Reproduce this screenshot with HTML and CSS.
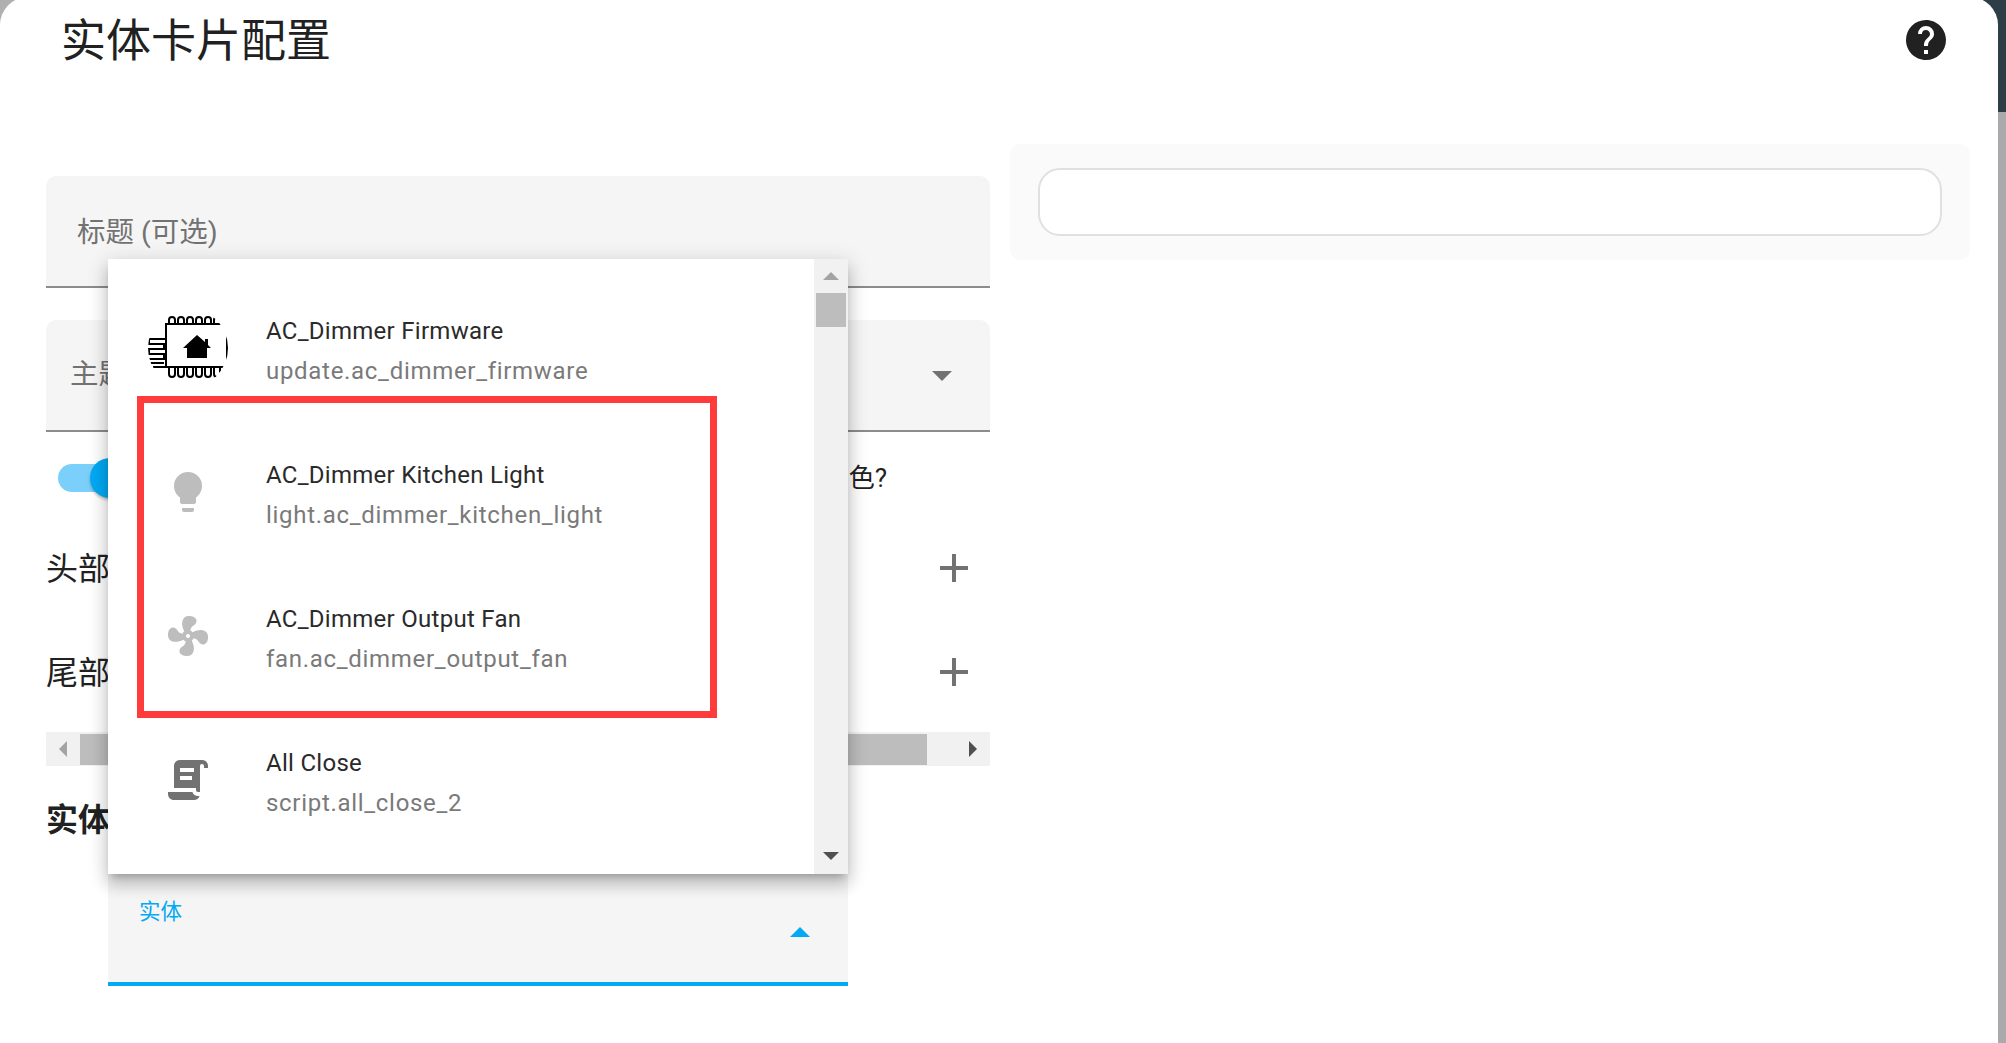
FILE: index.html
```html
<!DOCTYPE html>
<html lang="zh">
<head>
<meta charset="utf-8">
<title>实体卡片配置</title>
<link rel="stylesheet" href="styles.css">
</head>
<body>
<main class="dialog">
  <header class="header">
    <h1 class="title">实体卡片配置</h1>
    <svg class="help" viewBox="0 0 24 24"><path d="M15.07,11.25L14.17,12.17C13.45,12.89 13,13.5 13,15H11V14.5C11,13.39 11.45,12.39 12.17,11.67L13.41,10.41C13.78,10.05 14,9.55 14,9C14,7.89 13.1,7 12,7A2,2 0 0,0 10,9H8A4,4 0 0,1 12,5A4,4 0 0,1 16,9C16,9.88 15.64,10.67 15.07,11.25M13,19H11V17H13M12,2A10,10 0 0,0 2,12C2,17.52 6.48,22 12,22A10,10 0 0,0 22,12C22,6.47 17.5,2 12,2Z"/></svg>
  </header>
  <div class="columns">
    <section class="editor">
      <div class="field field-title"><span class="field-label">标题 (可选)</span></div>
      <div class="field field-theme"><span class="field-label">主题</span><span class="tri tri-down"></span></div>
      <div class="switch-row">
        <span class="toggle"><span class="toggle-knob"></span></span>
        <span class="switch-label">根据状态为图标着色?</span>
      </div>
      <div class="add-row"><span class="add-label">头部微件</span><svg class="plus" viewBox="0 0 28 28"><path d="M12 0h4v12h12v4H16v12h-4V16H0v-4h12z"/></svg></div>
      <div class="add-row"><span class="add-label">尾部微件</span><svg class="plus" viewBox="0 0 28 28"><path d="M12 0h4v12h12v4H16v12h-4V16H0v-4h12z"/></svg></div>
      <div class="hscroll">
        <span class="hscroll-btn"><span class="tri tri-left"></span></span>
        <span class="hscroll-thumb"></span>
        <span class="hscroll-btn"><span class="tri tri-right"></span></span>
      </div>
      <h2 class="section-title">实体 (必填)</h2>
      <div class="field field-entity"><span class="entity-label">实体</span><span class="tri tri-up-blue"></span></div>
    </section>
    <aside class="preview">
      <div class="preview-card"></div>
    </aside>
  </div>

  <div class="dropdown">
    <ul class="list">
      <li class="item">
        <span class="item-icon">
          <svg class="chip" viewBox="0 0 80 80">
            <defs><clipPath id="round"><circle cx="40" cy="40" r="40"/></clipPath></defs>
            <g clip-path="url(#round)">
              <path class="chip-line" d="M18 16H79V59H18ZM5 59H18"/>
              <path class="chip-line" d="M21 16V12a3 3 0 0 1 6 0V16M30 16V12a3 3 0 0 1 6 0V16M39 16V12a3 3 0 0 1 6 0V16M48 16V12a3 3 0 0 1 6 0V16M57 16V12a3 3 0 0 1 6 0V16M66 16V12a3 3 0 0 1 6 0V16"/>
              <path class="chip-line" d="M21 59V66a3 3 0 0 0 6 0V59M30 59V66a3 3 0 0 0 6 0V59M39 59V66a3 3 0 0 0 6 0V59M48 59V66a3 3 0 0 0 6 0V59M57 59V66a3 3 0 0 0 6 0V59M66 59V66a3 3 0 0 0 6 0V59"/>
              <path class="chip-line" d="M18 31H1V36H16V41H1V46H16V51H1V55H16"/>
              <path d="M49 27L57 34V31H60V37L63 40H59V50H39V40H35Z"/>
            </g>
          </svg>
        </span>
        <span class="item-text"><span class="item-name">AC_Dimmer Firmware</span><span class="item-id">update.ac_dimmer_firmware</span></span>
      </li>
      <li class="item">
        <span class="item-icon">
          <svg class="icon icon-off" viewBox="0 0 24 24"><path d="M12,2A7,7 0 0,0 5,9C5,11.38 6.19,13.47 8,14.74V17A1,1 0 0,0 9,18H15A1,1 0 0,0 16,17V14.74C17.81,13.47 19,11.38 19,9A7,7 0 0,0 12,2M9,21A1,1 0 0,0 10,22H14A1,1 0 0,0 15,21V20H9V21Z"/></svg>
        </span>
        <span class="item-text"><span class="item-name">AC_Dimmer Kitchen Light</span><span class="item-id">light.ac_dimmer_kitchen_light</span></span>
      </li>
      <li class="item">
        <span class="item-icon">
          <svg class="icon icon-off" viewBox="0 0 24 24"><path d="M12,11A1,1 0 0,0 11,12A1,1 0 0,0 12,13A1,1 0 0,0 13,12A1,1 0 0,0 12,11M12.5,2C17,2 17.11,5.57 14.75,6.75C13.76,7.24 13.32,8.29 13.13,9.22C13.61,9.42 14.03,9.73 14.35,10.13C18.05,8.13 22.03,8.92 22.03,12.5C22.03,17 18.46,17.1 17.28,14.73C16.78,13.74 15.72,13.3 14.79,13.11C14.59,13.59 14.28,14 13.88,14.34C15.87,18.03 15.08,22 11.5,22C7,22 6.91,18.42 9.27,17.24C10.25,16.75 10.69,15.71 10.89,14.79C10.4,14.59 9.97,14.27 9.65,13.87C5.96,15.85 2,15.07 2,11.5C2,7 5.56,6.89 6.74,9.26C7.24,10.25 8.29,10.68 9.22,10.87C9.41,10.39 9.73,9.97 10.14,9.65C8.15,5.96 8.94,2 12.5,2Z"/></svg>
        </span>
        <span class="item-text"><span class="item-name">AC_Dimmer Output Fan</span><span class="item-id">fan.ac_dimmer_output_fan</span></span>
      </li>
      <li class="item">
        <span class="item-icon">
          <svg class="icon icon-on" viewBox="0 0 24 24"><path d="M17.8,20C17.4,21.2 16.3,22 15,22H5C3.3,22 2,20.7 2,19V18H5L14.2,18C14.6,19.2 15.7,20 17,20H17.8M19,2C20.7,2 22,3.3 22,5V6H20V5C20,4.4 19.6,4 19,4C18.4,4 18,4.4 18,5V18H17C16.4,18 16,17.6 16,17V16H5V5C5,3.3 6.3,2 8,2H19M8,6V8H15V6H8M8,10V12H14V10H8Z"/></svg>
        </span>
        <span class="item-text"><span class="item-name">All Close</span><span class="item-id">script.all_close_2</span></span>
      </li>
    </ul>
    <div class="vscroll">
      <span class="tri tri-up-gray"></span>
      <span class="vscroll-thumb"></span>
      <span class="vscroll-space"></span>
      <span class="tri tri-down-dark"></span>
    </div>
  </div>

  <div class="annotation"></div>
</main>
<div class="page-scroll"><span class="page-scroll-thumb"></span></div>
</body>
</html>
```

FILE: styles.css
```css
* { box-sizing: border-box; }
html, body { height: 100%; }
body {
  margin: 0;
  display: flex;
  overflow: hidden;
  font-family: Roboto, "Noto Sans CJK SC", sans-serif;
  color: #212121;
  background: linear-gradient(90deg, #b0b0b0 50%, #2f3e46 50%);
}
.dialog {
  position: relative;
  flex: 1;
  margin-top: -3px;
  height: 1046px;
  padding: 0 28px 0 46px;
  background: #fff;
  border-radius: 28px 28px 0 0;
  overflow: hidden;
}
.page-scroll { width: 8px; background: #aaa; }
.page-scroll-thumb { display: block; height: 112px; background: #2f3e46; }

.header {
  height: 147px;
  display: flex;
  justify-content: space-between;
  padding: 15px 20px 0 15px;
}
.title { margin: 0; font-size: 45px; line-height: 60px; font-weight: 400; }
.help { width: 48px; height: 48px; margin-top: 4px; fill: #212121; }

.columns { display: flex; gap: 20px; align-items: flex-start; }
.editor { width: 944px; padding-top: 32px; }

.preview { flex: 1; height: 116px; padding: 24px 28px; background: #fafafa; border-radius: 10px; }
.preview-card { height: 68px; background: #fff; border: 2px solid #e0e0e0; border-radius: 22px; }

.field { background: #f5f5f5; height: 112px; border-radius: 10px 10px 0 0; border-bottom: 2px solid #8c8c8c; position: relative; }
.field-label { color: #727272; font-size: 28.5px; line-height: 36px; }
.field-title { padding: 39px 31px 0; margin-bottom: 32px; }
.field-theme { display: flex; align-items: center; justify-content: space-between; padding: 0 38px 0 24px; }
.field-entity {
  margin: 34px 142px 0 62px;
  width: 740px;
  border-radius: 0;
  border-bottom: 4px solid #03a9f4;
  display: flex;
  justify-content: space-between;
  padding: 25px 38px 0 31px;
}
.entity-label { color: #03a9f4; font-size: 21.5px; line-height: 26px; }

.tri { display: block; width: 0; height: 0; border-style: solid; border-color: transparent; }
.tri-down { border-width: 10px 10px 0; border-top-color: #727272; margin-top: 2px; }
.tri-up-blue { border-width: 0 10px 10px; border-bottom-color: #03a9f4; margin-top: 28px; }
.tri-left { border-width: 8px 8px 8px 0; border-right-color: #a3a3a3; }
.tri-right { border-width: 8px 0 8px 8px; border-left-color: #505050; }
.tri-up-gray { border-width: 0 8px 8px; border-bottom-color: #a3a3a3; }
.tri-down-dark { border-width: 8px 8px 0; border-top-color: #505050; }

.switch-row { display: flex; align-items: center; height: 40px; margin: 26px 0 18px; padding: 0 103px 0 12px; justify-content: space-between; }
.toggle { position: relative; display: block; width: 72px; height: 28px; border-radius: 14px; background: #7bd0fb; }
.toggle-knob { position: absolute; left: 32px; top: -6px; width: 40px; height: 40px; border-radius: 50%; background: #03a9f4; box-shadow: 0 2px 3px rgba(0,0,0,.25); }
.switch-label { font-size: 26px; line-height: 36px; }

.add-row { height: 104px; display: flex; align-items: center; justify-content: space-between; padding-right: 22px; font-size: 32px; }
.add-label { padding-bottom: 5px; }
.plus { width: 28px; height: 28px; fill: #727272; }

.hscroll { display: flex; height: 34px; margin-top: 8px; background: #f1f1f1; align-items: center; }
.hscroll-btn { width: 34px; display: flex; justify-content: center; flex: none; }
.hscroll-thumb { flex: 1; height: 31px; margin-right: 29px; background: #bdbdbd; }

.section-title { margin: 34px 0 0; font-size: 32px; line-height: 40px; font-weight: 700; }

.dropdown {
  position: absolute;
  left: 108px;
  top: 262px;
  width: 740px;
  height: 615px;
  display: flex;
  background: #fff;
  box-shadow: 0 6px 7px -4px rgba(0,0,0,.2), 0 11px 14px 1px rgba(0,0,0,.14), 0 4px 19px 3px rgba(0,0,0,.12);
}
.list { flex: 1; list-style: none; margin: 0; padding: 19px 0 0; }
.item { height: 144px; display: flex; align-items: center; padding-left: 56px; }
.item-icon { width: 48px; height: 48px; flex: none; margin-right: 54px; display: flex; align-items: center; justify-content: center; margin-top: -4px; }
.icon { width: 48px; height: 48px; }
.icon-off { fill: #bdbdbd; }
.icon-on { fill: #727272; }
.chip { width: 80px; height: 80px; flex: none; }
.chip-line { fill: none; stroke: #000; stroke-width: 2; }
.item-text { display: flex; flex-direction: column; padding-top: 1px; }
.item-name { font-size: 24px; line-height: 40px; color: #2a2a2a; letter-spacing: .28px; }
.item-id { font-size: 24px; line-height: 40px; color: #7a7a7a; letter-spacing: .7px; }

.vscroll { width: 34px; background: #f1f1f1; display: flex; flex-direction: column; align-items: center; padding: 13px 2px 14px; }
.vscroll-thumb { width: 30px; height: 34px; margin-top: 13px; background: #bdbdbd; flex: none; }
.vscroll-space { flex: 1; }

.annotation { position: absolute; left: 137px; top: 399px; width: 580px; height: 322px; border: 7px solid #ff3b3b; pointer-events: none; }
```
